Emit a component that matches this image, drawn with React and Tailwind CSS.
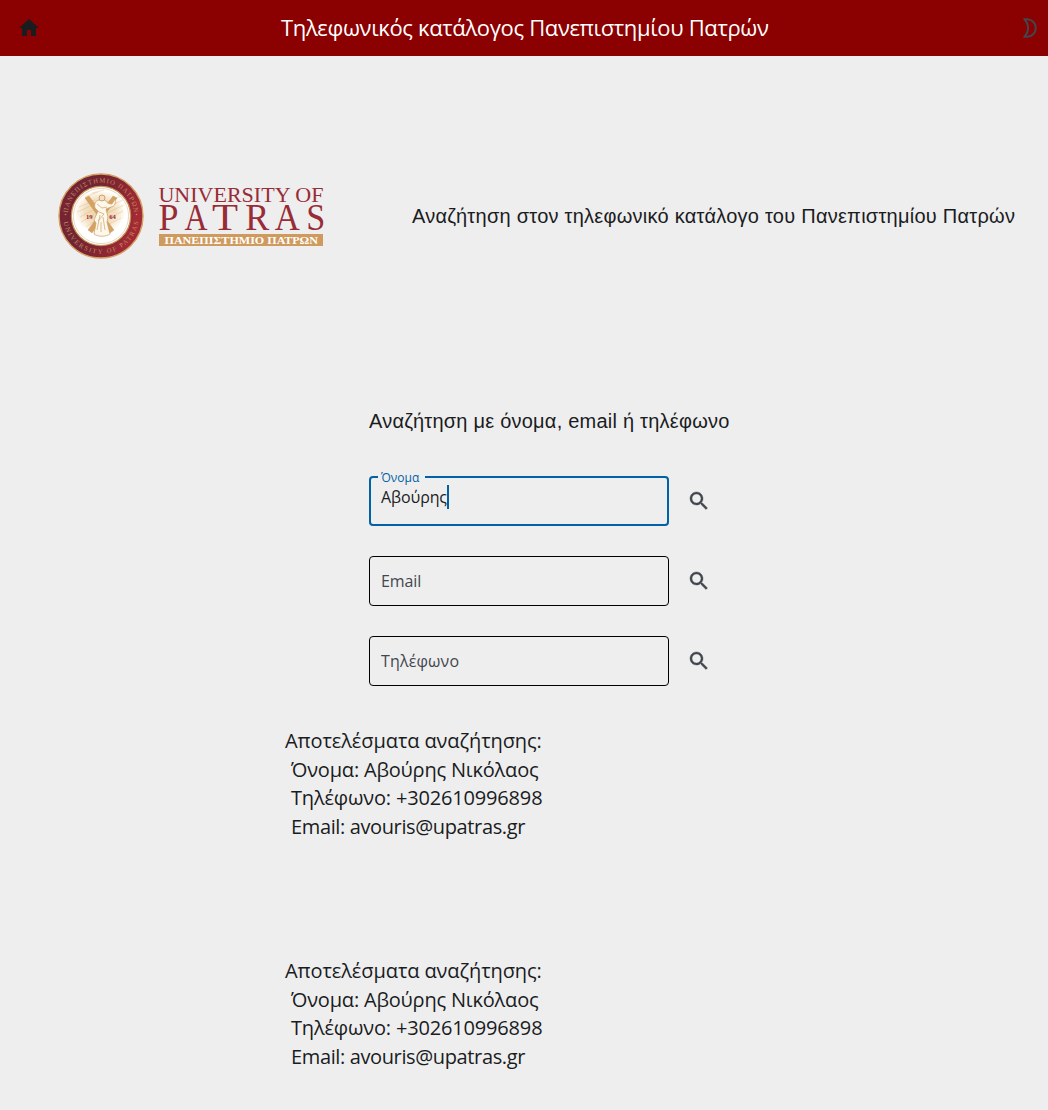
const HomeIcon = () => (
  <svg viewBox="0 0 24 24" className="h-6 w-6 fill-[#1a1c1e]">
    <path d="M10 20v-6h4v6h5v-8h3L12 3 2 12h3v8z" />
  </svg>
);

const MoonIcon = () => (
  <svg viewBox="0 0 24 24" className="h-6 w-6 fill-none stroke-[#42474e] stroke-2">
    <path d="M6.2 3.2H9a8.8 8.8 0 0 1 0 17.6H6.2A12 12 0 0 0 6.2 3.2z" strokeLinejoin="round" />
  </svg>
);

const SearchIcon = () => (
  <svg viewBox="0 0 24 24" className="h-6 w-6 fill-[#42474e] stroke-[#42474e] stroke-[0.4]">
    <path d="M15.5 14h-.79l-.28-.27C15.41 12.59 16 11.11 16 9.5 16 5.91 13.09 3 9.5 3S3 5.91 3 9.5 5.91 16 9.5 16c1.61 0 3.09-.59 4.23-1.57l.27.28v.79l5 4.99L20.49 19l-4.99-5zm-6 0C7.01 14 5 11.99 5 9.5S7.01 5 9.5 5 14 7.01 14 9.5 11.99 14 9.5 14z" />
  </svg>
);

const Logo = () => (
  <svg viewBox="0 0 270 90" className="h-[90px] w-[270px]" fontFamily="Liberation Serif, serif">
    <defs>
      <linearGradient id="ring" x1="0" x2="1" y1="0" y2="0.3">
        <stop offset="0" stopColor="#7c2434" />
        <stop offset="0.35" stopColor="#6f2434" />
        <stop offset="0.6" stopColor="#7d2432" />
        <stop offset="1" stopColor="#a32a35" />
      </linearGradient>
      <radialGradient id="parchment">
        <stop offset="0" stopColor="#edd1a4" />
        <stop offset="0.6" stopColor="#f3dfc0" />
        <stop offset="1" stopColor="#fffdf9" />
      </radialGradient>
      <path id="upper" d="M11.7 45a33.3 33.3 0 0 1 66.6 0" />
      <path id="lower" d="M7.2 45a37.8 37.8 0 0 0 75.6 0" />
    </defs>
    <circle cx="45" cy="45" r="42" fill="url(#ring)" stroke="#d3a062" strokeWidth="1.4" />
    <circle cx="45" cy="45" r="29.6" fill="#fff" stroke="#c79255" strokeWidth="1.2" />
    <circle cx="45" cy="45" r="27.6" fill="#fff" stroke="#dfbd8c" strokeWidth=".6" />
    <ellipse cx="44" cy="41" rx="25" ry="21" fill="url(#parchment)" />
    <g stroke="#d7ad72" strokeWidth=".5" opacity=".65">
      <path d="M23 36l16-7M21 41l18-8M24 46l15-8M25 51l13-7M30 56l9-6M50 31l15-6M51 36l16-7M51 42l17-8M53 47l14-7M53 53l12-6M29 26l13-5M36 22l12-3" />
    </g>
    <g fill="#d6a262" stroke="#b98a50" strokeWidth=".3">
      <path d="M29 27l4-2 25 34-4 3z" />
      <path d="M57 25l4 2-25 35-4-3z" />
    </g>
    <path d="M43 29c-4 1-5 4-4 8l3 3-4 9 2 3-2 11c4 3 12 3 16 0l-3-12 1-5-2-8 5-2c4-1 5-4 4-8l-3 5c-3 0-5-1-6-3-1-1-3-2-5-1z" fill="#fdf7ec" stroke="#c79c63" strokeWidth=".7" />
    <circle cx="46" cy="27" r="3" fill="#f4dfbf" stroke="#c0935a" strokeWidth=".8" />
    <path d="M41 33l5 4 5-1M41 40l7 3-6 7M44 44l-3 15M47 46l2 13M45 51v10" fill="none" stroke="#cba36c" strokeWidth=".7" />
    <g fill="#97273a" fontSize="6.6" fontWeight="bold">
      <text x="30" y="47.6">19</text>
      <text x="53.3" y="47.6">64</text>
    </g>
    <g fill="#c48a58" fontSize="6.7">
      <text><textPath href="#upper" startOffset="3" textLength="98">ΠΑΝΕΠΙΣΤΗΜΙΟ ΠΑΤΡΩΝ</textPath></text>
      <text><textPath href="#lower" startOffset="6" textLength="107">UNIVERSITY OF PATRAS</textPath></text>
      <circle cx="9.5" cy="43.5" r=".8" />
      <circle cx="80.5" cy="43.5" r=".8" />
    </g>
    <g fill="#982c36">
      <text x="102.4" y="31" fontSize="22" textLength="165" lengthAdjust="spacingAndGlyphs">UNIVERSITY OF</text>
      <text y="59.2" x="102.6" fontSize="37" textLength="20" lengthAdjust="spacingAndGlyphs">P</text>
      <text y="59.2" x="128.5" fontSize="37" textLength="23" lengthAdjust="spacingAndGlyphs">A</text>
      <text y="59.2" x="156" fontSize="37" textLength="26" lengthAdjust="spacingAndGlyphs">T</text>
      <text y="59.2" x="189.2" fontSize="37" textLength="24" lengthAdjust="spacingAndGlyphs">R</text>
      <text y="59.2" x="218.8" fontSize="37" textLength="25" lengthAdjust="spacingAndGlyphs">A</text>
      <text y="59.2" x="250.2" fontSize="37" textLength="19" lengthAdjust="spacingAndGlyphs">S</text>
    </g>
    <rect x="103" y="63" width="164" height="12" fill="#cf9a5e" />
    <text x="108.5" y="72.6" fontSize="10.6" fontWeight="bold" fill="#fff" textLength="153.5" lengthAdjust="spacingAndGlyphs">ΠΑΝΕΠΙΣΤΗΜΙΟ ΠΑΤΡΩΝ</text>
  </svg>
);

const Field = ({ label, labelClass }) => (
  <div className="flex h-[50px] items-center gap-[18px]">
    <div className="flex h-[50px] w-[300px] items-center rounded-[4px] border border-black pl-[11px] text-base text-[#42474e]">
      <span className={labelClass}>{label}</span>
    </div>
    <SearchIcon />
  </div>
);

const FocusedField = () => (
  <div className="flex h-[50px] items-center gap-[18px]">
    <div className="relative flex h-[50px] w-[300px] items-start rounded-[4px] border-2 border-[#0061a4] pl-[10px] pt-[7px]">
      <span className="absolute -top-[8px] left-[7px] bg-[#eeeeee] pl-[3px] pr-[6px] text-xs leading-4 text-[#0061a4]">Όνομα</span>
      <span className="text-base leading-6 tracking-[-0.1px] text-[#1a1c1e]">Αβούρης</span>
      <span className="h-6 w-[2px] bg-[#0061a4]" />
    </div>
    <SearchIcon />
  </div>
);

const Results = () => (
  <div className="ml-[285px] flex flex-col whitespace-pre text-xl leading-[28.6px] text-[#1a1c1e]">
    <p className="tracking-[-0.09px]">Αποτελέσματα αναζήτησης:</p>
    <p className="pl-[6px] tracking-[-0.19px]">Όνομα: Αβούρης Νικόλαος</p>
    <p className="pl-[6px] tracking-[-0.17px]">Τηλέφωνο: +302610996898</p>
    <p className="pl-[6px] tracking-[-0.37px]">Email: avouris@upatras.gr</p>
  </div>
);

export default function App() {
  return (
    <div className="min-h-[1110px] bg-[#eeeeee] font-['Open_Sans','Noto_Sans',sans-serif]">
      <header className="flex h-14 items-center bg-[#8b0000] pl-[17px] pr-[6px]">
        <HomeIcon />
        <h1 className="mb-0.5 ml-[240px] flex-1 whitespace-nowrap text-[22px] leading-7 tracking-[-0.35px] text-white">Τηλεφωνικός κατάλογος Πανεπιστημίου Πατρών</h1>
        <MoonIcon />
      </header>
      <section className="mt-[115px] flex h-[90px] items-center pl-[56px]">
        <Logo />
        <p className="ml-[86px] whitespace-nowrap font-['Liberation_Sans',sans-serif] text-xl tracking-[0.25px] text-[#1a1c1e]">Αναζήτηση στον τηλεφωνικό κατάλογο του Πανεπιστημίου Πατρών</p>
      </section>
      <main className="pt-[145px]">
        <div className="ml-[369px]">
          <h2 className="h-[30px] font-['Liberation_Sans',sans-serif] text-xl leading-[30px] tracking-[0.23px] text-[#1a1c1e]">Αναζήτηση με όνομα, email ή τηλέφωνο</h2>
          <div className="mt-10 flex flex-col gap-[30px]">
            <FocusedField />
            <Field label="Email" labelClass="tracking-[-0.1px]" />
            <Field label="Τηλέφωνο" labelClass="tracking-[0.15px]" />
          </div>
        </div>
        <div className="mt-[41px] flex flex-col gap-[115.6px]">
          <Results />
          <Results />
        </div>
      </main>
    </div>
  );
}
